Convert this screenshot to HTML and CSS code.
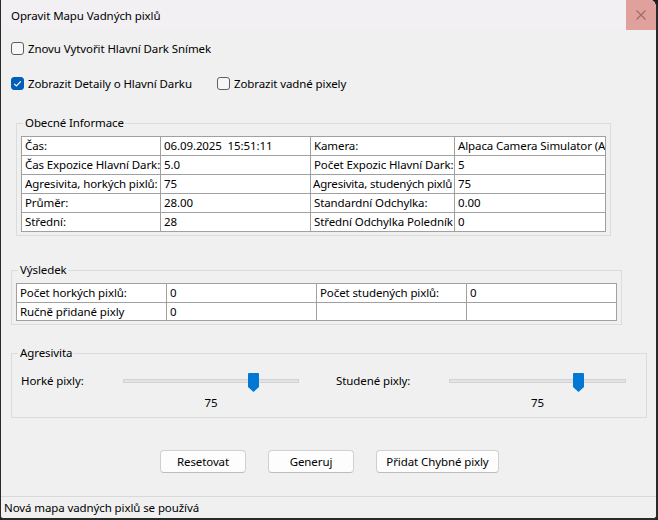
FILE: index.html
```html
<!DOCTYPE html>
<html lang="cs">
<head>
<meta charset="utf-8">
<title>Opravit Mapu Vadných pixlů</title>
<link rel="stylesheet" href="styles.css">
</head>
<body>
<div class="window">
  <div class="titlebar">
    <span class="title">Opravit Mapu Vadných pixlů</span>
    <div class="close">
      <svg width="10" height="10" viewBox="0 0 10 10"><path d="M0.5 0.5 L9.5 9.5 M9.5 0.5 L0.5 9.5" stroke="#9c6c69" stroke-width="1.1" fill="none"/></svg>
    </div>
  </div>
  <div class="content">
    <div class="check-row row1">
      <label class="check"><span class="box"></span>Znovu Vytvořit Hlavní Dark Snímek</label>
    </div>
    <div class="check-row row2">
      <label class="check first"><span class="box checked"><svg width="13" height="13" viewBox="0 0 13 13"><path d="M3.2 6.8 L5.4 9 L9.8 4.4" stroke="#fff" stroke-width="1.2" fill="none"/></svg></span>Zobrazit Detaily o Hlavní Darku</label>
      <label class="check"><span class="box"></span>Zobrazit vadné pixely</label>
    </div>

    <fieldset class="group g-info">
      <legend>Obecné Informace</legend>
      <div class="grid info">
        <div class="cell">Čas:</div><div class="cell">06.09.2025&nbsp; 15:51:11</div><div class="cell">Kamera:</div><div class="cell">Alpaca Camera Simulator (Alpaca)</div>
        <div class="cell">Čas Expozice Hlavní Dark:</div><div class="cell">5.0</div><div class="cell">Počet Expozic Hlavní Dark:</div><div class="cell">5</div>
        <div class="cell">Agresivita, horkých pixlů:</div><div class="cell">75</div><div class="cell tight">Agresivita, studených pixlů</div><div class="cell">75</div>
        <div class="cell">Průměr:</div><div class="cell">28.00</div><div class="cell">Standardní Odchylka:</div><div class="cell">0.00</div>
        <div class="cell">Střední:</div><div class="cell">28</div><div class="cell">Střední Odchylka Poledník</div><div class="cell">0</div>
      </div>
    </fieldset>

    <fieldset class="group g-result">
      <legend>Výsledek</legend>
      <div class="grid result">
        <div class="cell">Počet horkých pixlů:</div><div class="cell">0</div><div class="cell">Počet studených pixlů:</div><div class="cell">0</div>
        <div class="cell">Ručně přidané pixly</div><div class="cell">0</div><div class="cell"></div><div class="cell"></div>
      </div>
    </fieldset>

    <fieldset class="group g-aggr">
      <legend>Agresivita</legend>
      <div class="slider-row">
        <span class="s-label hot">Horké pixly:</span>
        <div class="slider hot-slider">
          <div class="track">
            <svg class="thumb" width="11" height="19" viewBox="0 0 11 19"><path d="M1 0 H10 Q11 0 11 1 V14 L5.5 19 L0 14 V1 Q0 0 1 0 Z" fill="#0078d4"/></svg>
          </div>
          <div class="s-value">75</div>
        </div>
        <span class="s-label cold">Studené pixly:</span>
        <div class="slider cold-slider">
          <div class="track">
            <svg class="thumb" width="11" height="19" viewBox="0 0 11 19"><path d="M1 0 H10 Q11 0 11 1 V14 L5.5 19 L0 14 V1 Q0 0 1 0 Z" fill="#0078d4"/></svg>
          </div>
          <div class="s-value">75</div>
        </div>
      </div>
    </fieldset>

    <div class="buttons">
      <button class="btn w86">Resetovat</button>
      <button class="btn w86">Generuj</button>
      <button class="btn w123">Přidat Chybné pixly</button>
    </div>
  </div>
  <div class="statusbar">Nová mapa vadných pixlů se používá</div>
</div>
</body>
</html>
```

FILE: styles.css
```css
* { box-sizing: border-box; }
html, body {
  margin: 0;
  padding: 0;
  background: #1e1e1e;
}
body {
  font-family: "Segoe UI", "Noto Sans", sans-serif;
  font-size: 11.5px;
  letter-spacing: -0.1px;
  color: #000;
}
.window {
  width: 658px;
  height: 520px;
  background: #f0f0f0;
  border-left: 1px solid #2a2a2a;
  border-right: 2px solid #2a2a2a;
  border-bottom: 2px solid #2a2a2a;
  border-radius: 0 8px 4px 4px;
  overflow: hidden;
  display: flex;
  flex-direction: column;
}
.titlebar {
  height: 30px;
  flex: none;
  background: #f3f0f3;
  display: flex;
  align-items: center;
  justify-content: space-between;
}
.title {
  padding-left: 10px;
  padding-top: 1px;
  line-height: 16px;
}
.close {
  width: 30px;
  height: 30px;
  background: #e0a09c;
  display: flex;
  align-items: center;
  justify-content: center;
}
.content {
  flex: 1;
  padding-top: 11px;
}
.check-row {
  display: flex;
  align-items: center;
  height: 15px;
  padding-left: 10px;
}
.row2 { margin-top: 20px; }
.check {
  display: flex;
  align-items: center;
  gap: 4px;
  line-height: 15px;
  white-space: nowrap;
}
.check.first { width: 206px; }
.box {
  width: 13px;
  height: 13px;
  border: 1px solid #5f5f5f;
  border-radius: 3px;
  background: #f7f7f7;
  flex: none;
  display: flex;
}
.box.checked {
  background: #005fb8;
  border-color: #005fb8;
}
.box.checked svg { margin: -1px; }

.group {
  margin: 0;
  border: 1px solid #dcdcdc;
  min-width: 0;
}
.group legend {
  margin-left: 2px;
  padding: 0 1px 0 2px;
  line-height: 16px;
}
.g-info {
  margin: 24px 0 0 15px;
  width: 595px;
  padding: 5px 4px 3px 4px;
}
.g-result {
  margin: 26px 0 0 10px;
  width: 611px;
  padding: 5px 4px 3px 4px;
}
.g-aggr {
  margin: 20px 0 0 10px;
  width: 636px;
  padding: 12px 4px 6px 4px;
}

.grid {
  display: grid;
  gap: 1px;
  padding: 1px;
  background: #a0a0a0;
}
.info {
  grid-template-columns: 138px 149px 143px 150px;
  grid-auto-rows: 18px;
}
.result {
  grid-template-columns: 149px 149px 149px 149px;
  grid-template-rows: 18px 17px;
}
.cell {
  background: #fff;
  padding-left: 3px;
  line-height: 18px;
  white-space: nowrap;
  overflow: hidden;
}
.cell.tight { letter-spacing: -0.2px; padding-left: 2px; }
.result .cell { line-height: 17px; }

.slider-row {
  display: flex;
  align-items: flex-start;
  padding-left: 5px;
}
.s-label {
  line-height: 16px;
  white-space: nowrap;
}
.s-label.hot { width: 102px; }
.s-label.cold { width: 113px; margin-left: 37px; }
.slider { display: flex; flex-direction: column; }
.hot-slider { width: 176px; }
.cold-slider { width: 177px; }
.track {
  position: relative;
  margin-top: 6px;
  height: 4px;
  background: #e4e4e4;
  border: 1px solid #d2d2d2;
}
.thumb {
  position: absolute;
  top: -7px;
  left: 124px;
}
.cold-slider .thumb { left: 123px; }
.s-value {
  margin-top: 12px;
  text-align: center;
  line-height: 16px;
}

.buttons {
  display: flex;
  justify-content: center;
  gap: 22px;
  margin-top: 32px;
  padding-left: 2px;
}
.btn {
  height: 23px;
  font: inherit;
  letter-spacing: inherit;
  color: #000;
  background: #fdfdfd;
  border: 1px solid #d0d0d0;
  border-bottom-color: #bdbdbd;
  border-radius: 4px;
  padding: 0;
}
.w86 { width: 86px; }
.w123 { width: 123px; }

.statusbar {
  flex: none;
  height: 22px;
  border-top: 1px solid #d9d9d9;
  padding: 2px 0 0 3px;
  line-height: 18px;
  white-space: nowrap;
}
```
